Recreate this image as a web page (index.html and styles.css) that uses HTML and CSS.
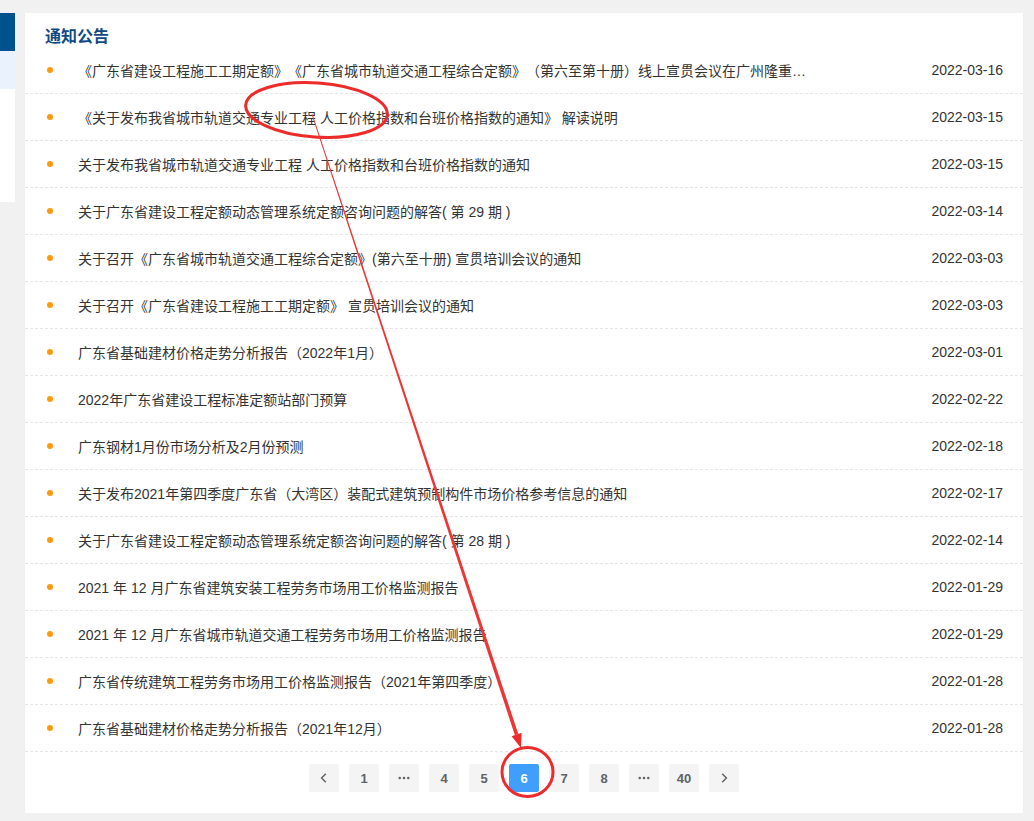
FILE: index.html
```html
<!DOCTYPE html>
<html lang="zh-CN">
<head>
<meta charset="utf-8">
<title>通知公告</title>
<link rel="stylesheet" href="styles.css">
</head>
<body>
<div class="page">
  <aside class="side">
    <div class="side-head"></div>
    <div class="side-item"></div>
    <div class="side-rest"></div>
  </aside>
  <main class="panel">
    <h2 class="panel-title">通知公告</h2>
    <ul class="list">
      <li class="row"><span class="dot"></span><span class="title">《广东省建设工程施工工期定额》《广东省城市轨道交通工程综合定额》（第六至第十册）线上宣贯会议在广州隆重召开</span><span class="date">2022-03-16</span></li>
      <li class="row"><span class="dot"></span><span class="title">《关于发布我省城市轨道交通专业工程 人工价格指数和台班价格指数的通知》 解读说明</span><span class="date">2022-03-15</span></li>
      <li class="row"><span class="dot"></span><span class="title">关于发布我省城市轨道交通专业工程 人工价格指数和台班价格指数的通知</span><span class="date">2022-03-15</span></li>
      <li class="row"><span class="dot"></span><span class="title">关于广东省建设工程定额动态管理系统定额咨询问题的解答( 第 29 期 )</span><span class="date">2022-03-14</span></li>
      <li class="row"><span class="dot"></span><span class="title">关于召开《广东省城市轨道交通工程综合定额》(第六至十册) 宣贯培训会议的通知</span><span class="date">2022-03-03</span></li>
      <li class="row"><span class="dot"></span><span class="title">关于召开《广东省建设工程施工工期定额》 宣贯培训会议的通知</span><span class="date">2022-03-03</span></li>
      <li class="row"><span class="dot"></span><span class="title">广东省基础建材价格走势分析报告（2022年1月）</span><span class="date">2022-03-01</span></li>
      <li class="row"><span class="dot"></span><span class="title">2022年广东省建设工程标准定额站部门预算</span><span class="date">2022-02-22</span></li>
      <li class="row"><span class="dot"></span><span class="title">广东钢材1月份市场分析及2月份预测</span><span class="date">2022-02-18</span></li>
      <li class="row"><span class="dot"></span><span class="title">关于发布2021年第四季度广东省（大湾区）装配式建筑预制构件市场价格参考信息的通知</span><span class="date">2022-02-17</span></li>
      <li class="row"><span class="dot"></span><span class="title">关于广东省建设工程定额动态管理系统定额咨询问题的解答( 第 28 期 )</span><span class="date">2022-02-14</span></li>
      <li class="row"><span class="dot"></span><span class="title">2021 年 12 月广东省建筑安装工程劳务市场用工价格监测报告</span><span class="date">2022-01-29</span></li>
      <li class="row"><span class="dot"></span><span class="title">2021 年 12 月广东省城市轨道交通工程劳务市场用工价格监测报告</span><span class="date">2022-01-29</span></li>
      <li class="row"><span class="dot"></span><span class="title">广东省传统建筑工程劳务市场用工价格监测报告（2021年第四季度）</span><span class="date">2022-01-28</span></li>
      <li class="row"><span class="dot"></span><span class="title">广东省基础建材价格走势分析报告（2021年12月）</span><span class="date">2022-01-28</span></li>
    </ul>
    <nav class="pager">
      <span class="pg"><svg class="chev" viewBox="0 0 10 10"><path d="M6.5 1.5 L3 5 L6.5 8.5" fill="none" stroke="#606266" stroke-width="1.2"/></svg></span>
      <span class="pg">1</span>
      <span class="pg"><svg class="more" viewBox="0 0 14 4"><circle cx="2" cy="2" r="1.5"/><circle cx="7" cy="2" r="1.5"/><circle cx="12" cy="2" r="1.5"/></svg></span>
      <span class="pg">4</span>
      <span class="pg">5</span>
      <span class="pg active">6</span>
      <span class="pg">7</span>
      <span class="pg">8</span>
      <span class="pg"><svg class="more" viewBox="0 0 14 4"><circle cx="2" cy="2" r="1.5"/><circle cx="7" cy="2" r="1.5"/><circle cx="12" cy="2" r="1.5"/></svg></span>
      <span class="pg">40</span>
      <span class="pg"><svg class="chev" viewBox="0 0 10 10"><path d="M3.5 1.5 L7 5 L3.5 8.5" fill="none" stroke="#606266" stroke-width="1.2"/></svg></span>
    </nav>
  </main>
</div>
<svg class="annot" width="1034" height="821" viewBox="0 0 1034 821">
  <ellipse cx="316.5" cy="110" rx="71" ry="27" transform="rotate(4 316.5 110)" fill="none" stroke="#ee2b2b" stroke-width="3"/>
  <polygon points="311.6,114.2 312.4,113.8 518.3,734.1 514.9,735.3" fill="#ee3535"/>
  <polygon points="521,748 521.6,732.8 511.6,736.2" fill="#ee2b2b"/>
  <ellipse cx="527.5" cy="772" rx="25.5" ry="24.5" fill="none" stroke="#ee2b2b" stroke-width="3"/>
</svg>
</body>
</html>
```

FILE: styles.css
```css
html, body {
  margin: 0;
  padding: 0;
}
body {
  background: #f1f1f1;
  width: 1034px;
  height: 821px;
  overflow: hidden;
  position: relative;
  font-family: "Liberation Sans", "Noto Sans CJK SC", sans-serif;
  text-spacing-trim: space-all;
}
.page {
  display: flex;
  align-items: flex-start;
  padding-top: 13px;
  gap: 10px;
}
.side {
  width: 15px;
  background: #fff;
  display: flex;
  flex-direction: column;
}
.side-head {
  height: 38px;
  background: #00528e;
}
.side-item {
  height: 38px;
  background: #eaf3fd;
}
.side-rest {
  height: 113px;
}
.panel {
  width: 998px;
  height: 800px;
  background: #fff;
  box-sizing: border-box;
  padding-top: 10px;
}
.panel-title {
  margin: 0 20px;
  height: 24px;
  line-height: 24px;
  font-size: 16px;
  font-weight: bold;
  color: #0f4a82;
  font-family: "Noto Sans CJK SC", sans-serif;
}
.list {
  list-style: none;
  margin: 0;
  padding: 0;
}
.row {
  height: 46px;
  border-bottom: 1px dashed #e6e6e6;
  display: flex;
  align-items: center;
  padding: 0 20px;
  font-size: 14px;
  color: #333;
}
.dot {
  width: 6px;
  height: 6px;
  border-radius: 50%;
  background: #ff9a0d;
  margin-left: 1.5px;
  margin-right: 25.5px;
  flex: none;
}
.title {
  width: 730px;
  white-space: nowrap;
  overflow: hidden;
  text-overflow: ellipsis;
}
.date {
  margin-left: auto;
  color: #333;
}
.pager {
  display: flex;
  justify-content: center;
  gap: 10px;
  margin-top: 12px;
}
.pg {
  width: 30px;
  height: 28px;
  border-radius: 2px;
  background: #f4f4f5;
  color: #606266;
  font-size: 13px;
  font-weight: bold;
  display: flex;
  align-items: center;
  justify-content: center;
}
.pg.active {
  background: #409eff;
  color: #fff;
}
.chev {
  width: 12px;
  height: 12px;
}
.more {
  width: 12px;
  height: 4px;
  fill: #606266;
}
.annot {
  position: absolute;
  left: 0;
  top: 0;
  pointer-events: none;
}
```
